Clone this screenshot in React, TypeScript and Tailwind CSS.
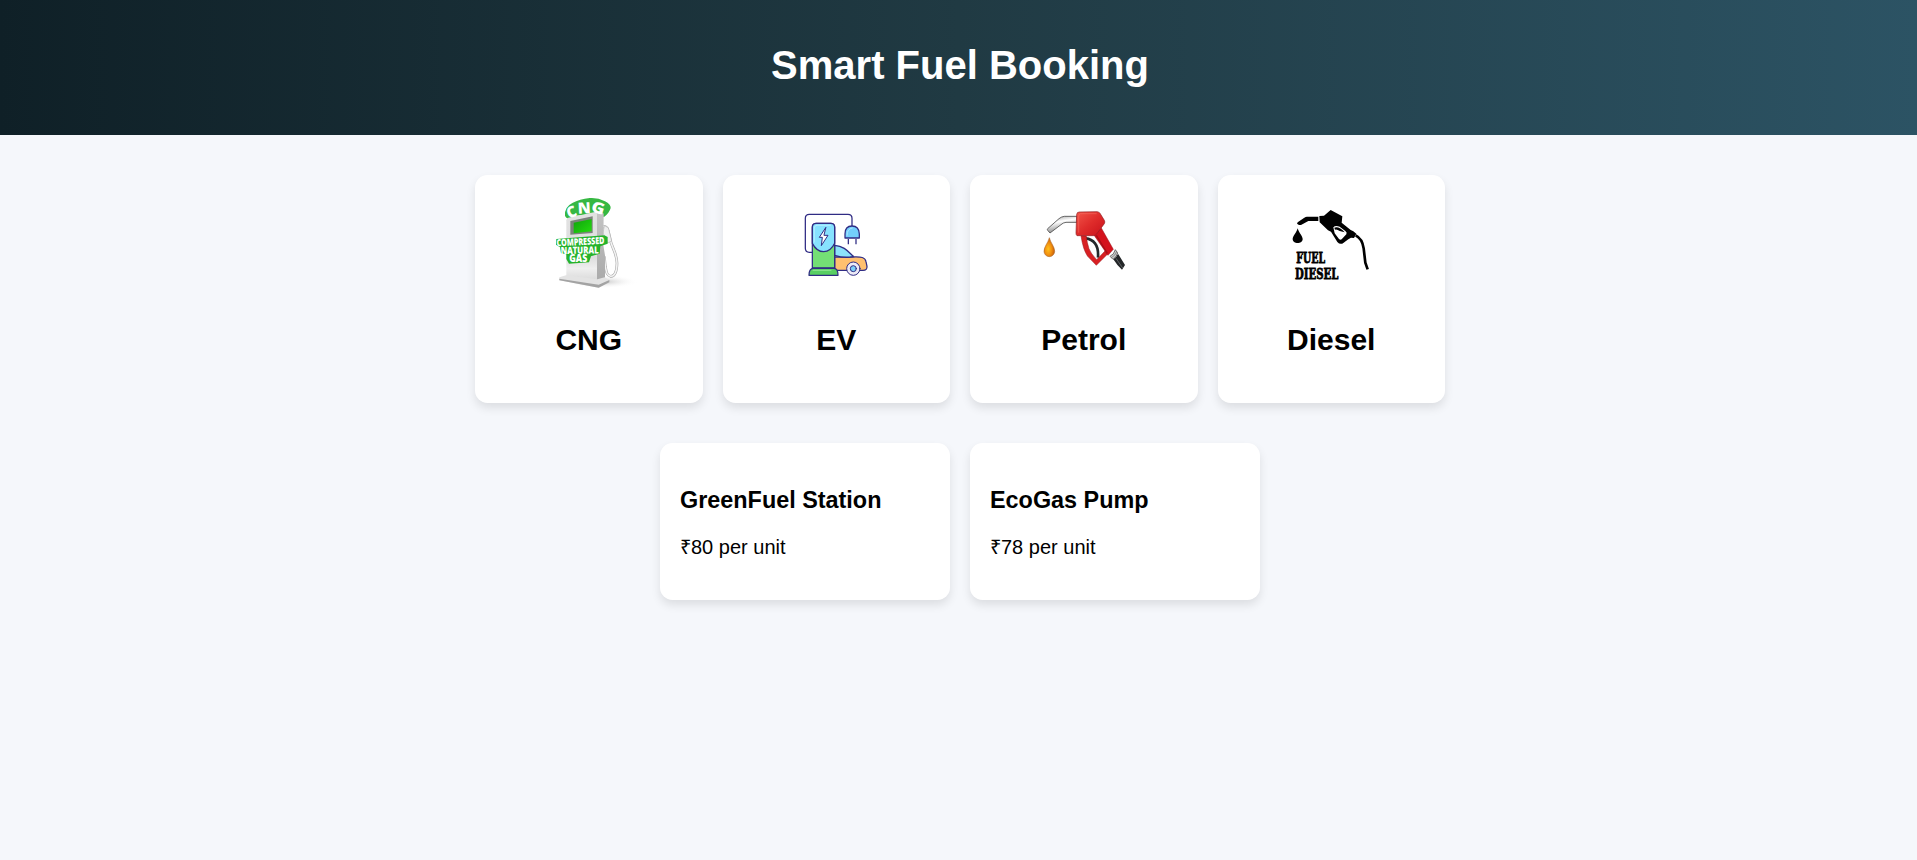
import React from "react";

function CngIcon() {
  return (
    <svg viewBox="26 30 300 300" className="size-[100px]">
      <defs>
        <linearGradient id="cngBody" x1="0" y1="0" x2="0" y2="1">
          <stop offset="0" stopColor="#e2e2e2" />
          <stop offset="0.65" stopColor="#dedede" />
          <stop offset="0.8" stopColor="#efefef" />
          <stop offset="1" stopColor="#d6d6d6" />
        </linearGradient>
        <linearGradient id="cngSide" x1="0" y1="0" x2="0" y2="1">
          <stop offset="0" stopColor="#c4c4c4" />
          <stop offset="1" stopColor="#a9a9a9" />
        </linearGradient>
        <linearGradient id="cngScreen" x1="0" y1="0" x2="1" y2="1">
          <stop offset="0" stopColor="#0fa30c" />
          <stop offset="1" stopColor="#25dc10" />
        </linearGradient>
        <radialGradient id="cngFloor">
          <stop offset="0" stopColor="#c4c4c4" />
          <stop offset="1" stopColor="#ffffff" stopOpacity="0" />
        </radialGradient>
      </defs>
      <ellipse cx="215" cy="290" rx="108" ry="20" fill="url(#cngFloor)" />
      <path d="M216 127q14-8 18 12l6 26c4 22 20 40 20 70 0 26-8 40-19 39-12-2-13-14-16-30l-3-30" fill="none" stroke="#a9a9a9" strokeWidth="8" />
      <path d="M216 127q14-8 18 12l6 26c4 22 20 40 20 70 0 26-8 40-19 39-12-2-13-14-16-30l-3-30" fill="none" stroke="#f4f4f4" strokeWidth="4.500" />
      <path d="M222 122l12 6 10 40-12 6-14-30z" fill="#efefef" stroke="#a5a5a5" strokeWidth="1.500" />
      <path d="M104 92q-2-26 22-38 22-12 52-15 24-2 46 10 18 9 17 20-4 15-20 27l-24-10-60 6-18 10q-12-2-15-10z" fill="#36b842" />
      <path d="M190 88l24-8 6 6-1 95 5 30v78l-34 5z" fill="url(#cngSide)" />
      <path d="M108 106q0-6 6-8l80-17q6-1 6 6v206l-92-12z" fill="url(#cngBody)" />
      <path d="M120 108l67-14v50l-67 5z" fill="#7b837b" />
      <path d="M130 113l54-11v37l-54 6z" fill="url(#cngScreen)" />
      <path d="M87 277l20-6 94 12 22-6 14 8v7l-32 16-118-22z" fill="#e3e3e3" />
      <path d="M87 281l118 18 32-14v7l-32 16-118-22z" fill="#a3a3a3" />
      <g fontFamily="Open Sans, sans-serif" fontWeight="800" fill="#fff" fontSize="46">
        <text x="116" y="101" textLength="29" lengthAdjust="spacingAndGlyphs" transform="rotate(-22 116 101)">C</text>
        <text x="143" y="86" textLength="39" lengthAdjust="spacingAndGlyphs" transform="rotate(-3 143 86)">N</text>
        <text x="180" y="78" textLength="40" lengthAdjust="spacingAndGlyphs" transform="rotate(18 180 78)">G</text>
      </g>
      <path d="M78 162l144-11 10 5v20l-22 8-2 22-26 8-6 18-60 4-8-14v-14l-16-3-3-18-12-8z" fill="#26b32c" />
      <g fontFamily="Open Sans, sans-serif" fontWeight="800" fill="#fff" fontSize="29">
        <text x="79" y="184" textLength="144" lengthAdjust="spacingAndGlyphs" transform="rotate(-3 79 184)">COMPRESSED</text>
        <text x="91" y="207" textLength="114" lengthAdjust="spacingAndGlyphs" transform="rotate(-1 91 207)">NATURAL</text>
        <text x="117" y="231" textLength="54" lengthAdjust="spacingAndGlyphs">GAS</text>
      </g>
    </svg>
  );
}

function EvIcon() {
  return (
    <svg viewBox="19 15 300 300" className="size-[100px]" stroke="#302c84" strokeWidth="3.800" strokeLinejoin="round" strokeLinecap="round">
      <path d="M97 187h-8q-12 0-12-12V85q0-12 12-12h116q12 0 12 12v22" fill="none" />
      <path d="M165 201h56c18 0 35-2 38 14l3 14q1 12-12 12h-85z" fill="#ffc06f" />
      <path d="M165 166c28 2 40 18 56 33-22 6-40 2-56-3z" fill="#8ce2fa" />
      <circle cx="221" cy="236" r="20" fill="#eceaf6" strokeWidth="3" />
      <circle cx="221" cy="236" r="9" fill="#7bcff7" strokeWidth="3" />
      <path d="M98 234V112q0-12 12-12h43q12 0 12 12v122z" fill="#74df75" />
      <path d="M98 160V112q0-12 12-12h43q12 0 12 12v48q-12 25-33 25T98 160z" fill="#87e2ff" />
      <path d="M104 156v-42q0-8 8-8h40" fill="none" stroke="#bdf0ff" strokeWidth="2.500" />
      <path d="M138 113l-19 29h9l-3 25 20-31h-11z" fill="#fff" strokeWidth="3" />
      <path d="M88 256c0-14 5-21 13-21h62c8 0 12 8 12 21z" fill="#58cf62" />
      <path d="M100 241h54" stroke="#9dea9c" strokeWidth="2.500" />
      <path d="M206 147v16M229 147v16" strokeLinecap="butt" />
      <path d="M196 144v-12q0-24 21-24t22 24v12z" fill="#73cffc" />
      <path d="M202 136q0-20 16-22" fill="none" stroke="#b7edff" strokeWidth="2.500" />
    </svg>
  );
}

function PetrolIcon() {
  return (
    <svg viewBox="11 15 300 300" className="size-[100px]">
      <defs>
        <linearGradient id="petRed" x1="0" y1="0" x2="1" y2="1">
          <stop offset="0" stopColor="#f25549" />
          <stop offset="0.5" stopColor="#df2c2b" />
          <stop offset="1" stopColor="#c8101a" />
        </linearGradient>
        <linearGradient id="petPipe" x1="0" y1="0" x2="0.3" y2="1">
          <stop offset="0" stopColor="#9b9b9b" />
          <stop offset="0.4" stopColor="#fff" />
          <stop offset="1" stopColor="#888" />
        </linearGradient>
        <radialGradient id="petDrop" cx="0.4" cy="0.6" r="0.6">
          <stop offset="0" stopColor="#ffc21c" />
          <stop offset="0.5" stopColor="#f29210" />
          <stop offset="1" stopColor="#c75f0a" />
        </radialGradient>
      </defs>
      <path d="M140 79h-38q-9 1-16 7l-34 30q-2 3 0 5l7 8 33-25q6-6 15-7h33z" fill="url(#petPipe)" stroke="#4c4c4c" strokeWidth="2.500" />
      <path d="M57 143c4 16 16 27 16 41a16 16 0 0 1-32 0c0-14 12-25 16-41z" fill="url(#petDrop)" stroke="#9e5a1c" strokeWidth="1.500" />
      <path d="M166 145q18 2 28 15 11 14 9 43" fill="none" stroke="#24292b" strokeWidth="8" />
      <path d="M152 137q6 42 20 62l26 27 34-34-6-11-27 28q-18-19-23-33-6-18-8-38z" fill="#d82023" stroke="#961b20" strokeWidth="1.500" />
      <path d="M190 134l23-20 36 64-16 18q-5-4-9-13z" fill="#d4121c" stroke="#961b20" strokeWidth="1.500" />
      <path d="M198 136l33 54" stroke="#a60f17" strokeWidth="4" />
      <path d="M139 73q1-7 8-7l53-1q6 0 9 5l13 21q3 5 0 10l-23 31q-4 5-10 5h-49q-3-2-3-8z" fill="url(#petRed)" stroke="#8f2024" strokeWidth="2" />
      <path d="M145 128V78q0-6 6-7h48" fill="none" stroke="#ff8274" strokeWidth="2" opacity=".6" />
      <path d="M239 199q12-5 16-20l7 10q-3 12-14 19z" fill="#c9c9c9" stroke="#555" strokeWidth="2.500" />
      <path d="M243 203q12-6 16-18" fill="none" stroke="#555" strokeWidth="1.500" />
      <path d="M249 208q11-7 14-17l21 34-9 14q-13-10-26-31z" fill="#232628" />
      <path d="M257 205l20 29" stroke="#5d6062" strokeWidth="3" />
    </svg>
  );
}

function DieselIcon() {
  return (
    <svg viewBox="4 15 300 300" className="size-[100px]" fill="#000">
      <path d="M116 80H82q-4 0-8 3L54 97l-2 4 6 4h6l22-12h30z" />
      <path d="M54 115c4 14 15 24 15 32 0 16-30 16-30 0 0-8 11-18 15-32z" />
      <path
        fillRule="evenodd"
        d="M119 78l14-1 20-17 35 19-2 19 27 22 8 4 9 7-7 13-9-1-8 5-14 10q-10 8-19-2l-19-31-9-4-25-24zM161 112l4 18 13 17q4 4 8 1l14-15q3-6-3-10l-17-13q-13-5-19 2z"
      />
      <path d="M164 113q14-5 31 14l-15-4q-8-6-14-4z" />
      <path d="M228 136q20 10 24 39l5 43 7 20" fill="none" stroke="#000" strokeWidth="8" />
      <g fontFamily="DejaVu Serif, serif" fontWeight="700" fontSize="47" stroke="#000" strokeWidth="2.500">
        <text x="50" y="218" textLength="86" lengthAdjust="spacingAndGlyphs">FUEL</text>
        <text x="46" y="268" textLength="130" lengthAdjust="spacingAndGlyphs">DIESEL</text>
      </g>
    </svg>
  );
}

const fuels = [
  { name: "CNG", Icon: CngIcon },
  { name: "EV", Icon: EvIcon },
  { name: "Petrol", Icon: PetrolIcon },
  { name: "Diesel", Icon: DieselIcon },
];

const stations = [
  { name: "GreenFuel Station", price: "₹80 per unit" },
  { name: "EcoGas Pump", price: "₹78 per unit" },
];

export default function App() {
  return (
    <div className="min-h-screen bg-[#f5f7fb] font-['Liberation_Sans',Arial,sans-serif] text-xl text-black">
      <header className="flex h-[135px] items-center justify-center bg-[linear-gradient(to_right,#0f2027,#203a43,#2c5364)] pb-[6px] pl-[3px] text-white">
        <h1 className="text-[40px] leading-[46px] font-bold">Smart Fuel Booking</h1>
      </header>
      <main className="pl-[3px]">
        <section className="flex justify-center gap-5 pt-10">
          {fuels.map(({ name, Icon }) => (
            <article key={name} className="flex h-[227.5px] w-[227.5px] flex-col items-center rounded-[12.5px] bg-white pt-5 shadow-[0_5px_10px_rgba(0,0,0,0.1)]">
              <Icon />
              <h2 className="mt-7 text-[30px] leading-[34px] font-bold">{name}</h2>
            </article>
          ))}
        </section>
        <section className="flex justify-center gap-5 pt-10">
          {stations.map(({ name, price }) => (
            <article key={name} className="h-[157px] w-[290px] rounded-[12.5px] bg-white px-5 pt-11 shadow-[0_5px_10px_rgba(0,0,0,0.1)]">
              <h3 className="text-[23.4px] leading-[27px] font-bold">{name}</h3>
              <p className="mt-[22px] leading-[23px]">{price}</p>
            </article>
          ))}
        </section>
      </main>
    </div>
  );
}
